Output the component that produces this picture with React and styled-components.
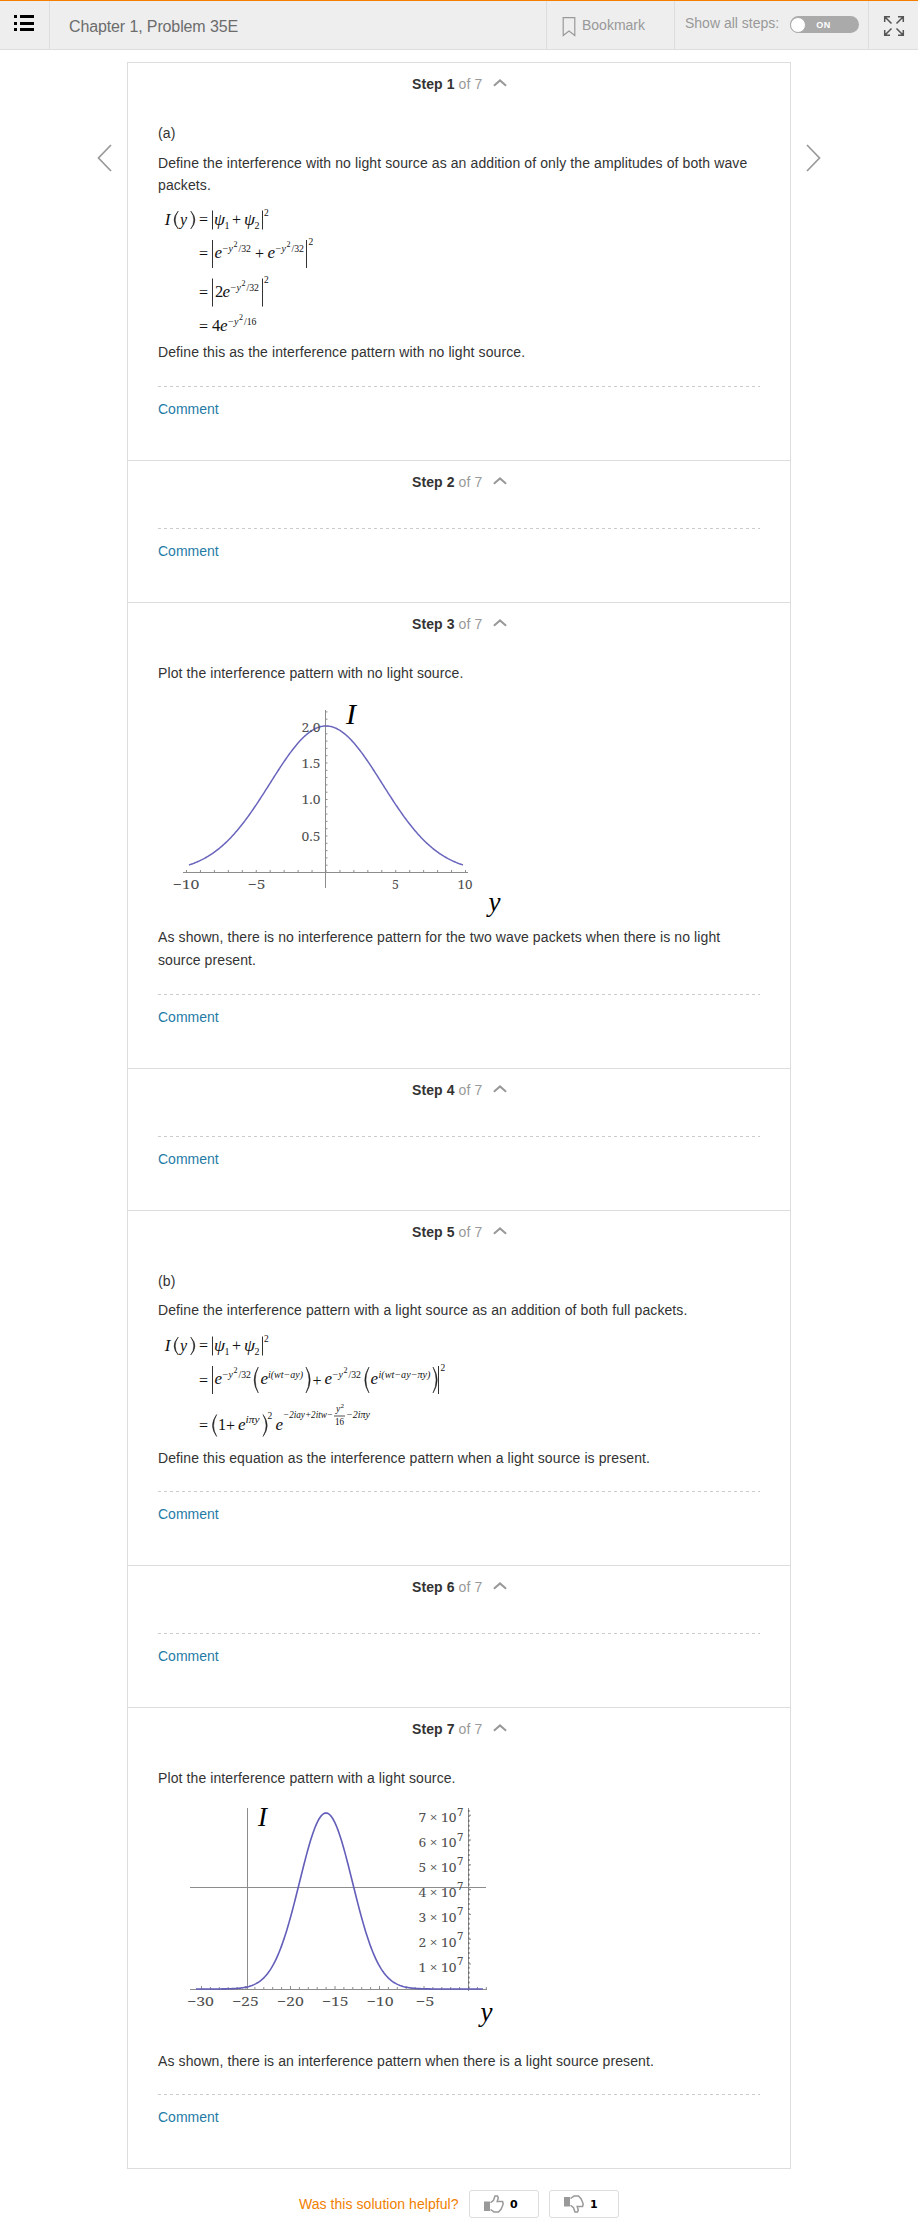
import React from 'react';
import styled, { createGlobalStyle } from 'styled-components';

const Global = createGlobalStyle`
  * { box-sizing: border-box; }
  html, body { margin: 0; background: #fff; }
  body { font-family: "Liberation Sans", Arial, sans-serif; font-size: 13px; color: #333; }
`;
const Page = styled.div`width: 918px; height: 2219px; overflow: hidden;`;
const Toolbar = styled.header`
  display: flex; height: 50px; background: #eee;
  border-top: 1px solid #f57d00; border-bottom: 1px solid #ddd; color: #999;
`;
const MenuButton = styled.div`width: 50px; border-right: 1px solid #ddd; padding: 14px 0 0 14px;`;
const Title = styled.h1`
  flex: 1; margin: 0; padding-left: 19px; font-weight: 400; font-size: 16px; line-height: 51px; color: #6c6c6c;
  letter-spacing: -.12px;
`;
const Tool = styled.div`
  display: flex; width: ${p => p.$w}px; border-left: 1px solid #ddd; padding: ${p => p.$pad};
`;
const BookmarkIcon = styled.svg`margin: 16px 6px 0 0;`;
const ToolText = styled.span`font-size: 14px; line-height: ${p => p.$lh}px; white-space: nowrap;`;
const Switch = styled.div`
  display: flex; align-items: center; width: 69px; height: 17px; margin: 15px 0 0 11px; border-radius: 9px;
  background: #aaa; color: #fff; font: 700 9px "Liberation Sans", sans-serif; letter-spacing: .6px;
`;
const Knob = styled.i`width: 16px; height: 16px; border: 1px solid #aaa; border-radius: 50%; background: #fff; margin-right: 10px;`;
const Main = styled.main`display: flex; padding-top: 12px;`;
const Side = styled.div`
  width: 127px; padding: 82px ${p => (p.$next ? '0 0 15px' : '15px 0 0')};
  display: flex; justify-content: ${p => (p.$next ? 'flex-start' : 'flex-end')}; align-items: flex-start;
`;
const Panel = styled.section`width: 664px; border: 1px solid #ddd; border-top: 0;`;
const Step = styled.article`
  height: ${p => p.$h}px; border-top: 1px solid #ddd; padding: 0 30px; display: flex; flex-direction: column;
`;
const StepHead = styled.h2`
  margin: 0; height: 44px; padding: 10px 0 0 254px; font-size: 14px; line-height: 22px; color: #333; display: flex;
  white-space: pre; letter-spacing: .1px;
`;
const Count = styled.span`font-weight: 400; color: #999; margin-right: 11px;`;
const Body = styled.div`flex: 1; padding-top: ${p => p.$top || 0}px;`;
const Text = styled.p`
  margin: 0 0 ${p => p.$gap || 0}px; font-size: 14px; line-height: ${p => p.$lh || 22}px; white-space: nowrap;
  letter-spacing: .1px;
`;
const Foot = styled.footer`height: 74px; padding-top: 12px;`;
const Dash = styled.svg`display: block; height: 1px; width: 602px; margin-bottom: -1px;`;
const Comment = styled.a`color: #1f7ba6; font-size: 14px; line-height: 22px;`;
const Figure = styled.svg`display: block; overflow: visible; margin-top: ${p => p.$top || 0}px;`;
const Helpful = styled.div`display: flex; padding: 21px 0 0 299px; color: #f08000; font-size: 14px;`;
const Question = styled.span`width: 170px; line-height: 28px; white-space: nowrap; letter-spacing: .05px;`;
const Vote = styled.button`
  width: 70px; height: 28px; margin-right: 10px; border: 1px solid #ddd; border-radius: 3px; background: #fff;
  display: flex; align-items: center; padding: 0 0 0 14px; gap: 6px;
  font: 700 11px "DejaVu Sans", sans-serif; color: #000;
`;

const serif = '"Liberation Serif", "Times New Roman", serif';

function StepBlock({ n, h, top, children }) {
  return (
    <Step $h={h}>
      <StepHead>
        <span>Step {n}</span><Count> of 7</Count>
        <svg width="14" height="20" viewBox="0 0 14 20"><path d="M.9 12.8L7 7.4L13.1 12.8" fill="none" stroke="#999" strokeWidth="2" /></svg>
      </StepHead>
      <Body $top={top}>{children}</Body>
      <Dash><line x1="0" y1=".5" x2="602" y2=".5" stroke="#ccc" strokeDasharray="3 3" /></Dash>
      <Foot><Comment>Comment</Comment></Foot>
    </Step>
  );
}

/* One run of maths text, stretched to the width w when given */
const Glyphs = styled.text`white-space: pre; font-style: ${p => (p.$up ? 'normal' : 'italic')};`;
function M({ x, y, s = 16, w, up, children }) {
  return <Glyphs x={x} y={y} fontSize={s} $up={up} textLength={w} lengthAdjust="spacingAndGlyphs">{children}</Glyphs>;
}
const Bar = ({ x, y1, y2 }) => <line x1={x} x2={x} y1={y1} y2={y2} stroke="#333" strokeWidth="1" />;
const Paren = ({ x, y, h, r }) => {
  const k = r ? 1 : -1;
  return <path d={`M${x} ${y}q${8.4 * k} ${h / 2} 0 ${h}q${6.2 * k} -${h / 2} 0 -${h}z`} fill="#222" stroke="#222" strokeWidth=".5" />;
};

/* I(y) = |psi1 + psi2|^2, with its baseline on y */
function FirstLine({ y }) {
  return (
    <g>
      <M x={6.8} y={y} s={17}>I</M>
      <Paren x={20.3} y={y - 13.5} h={18} /><M x={22} y={y}>y</M><Paren x={32.7} y={y - 13.5} h={18} r />
      <M x={41} y={y} up>=</M>
      <Bar x={54.5} y1={y - 14} y2={y + 5} />
      <M x={56} y={y} w={11}>ψ</M><M x={66.5} y={y + 4} s={10} up>1</M>
      <M x={74} y={y} up>+</M>
      <M x={86} y={y} w={11}>ψ</M><M x={96.5} y={y + 4} s={10} up>2</M>
      <Bar x={104.5} y1={y - 14} y2={y + 5} /><M x={106} y={y - 9} s={9.5} up>2</M>
    </g>
  );
}
/* e^(-y^2/den) with its left edge on x */
function Gauss({ x, y, den = '32' }) {
  return (
    <g>
      <M x={x} y={y} s={17}>e</M>
      <M x={x + 8} y={y - 6} s={10} up>−</M><M x={x + 14} y={y - 6} s={10}>y</M>
      <M x={x + 19} y={y - 11} s={8} up>2</M>
      <M x={x + 24} y={y - 6} s={10} w={12.5} up>/{den}</M>
    </g>
  );
}

function EquationA() {
  return (
    <Figure width="180" height="141" fontFamily={serif} fill="#111" $top={4}>
      <FirstLine y={24.5} />
      <M x={41} y={59} up>=</M><Bar x={54.5} y1={40} y2={68} /><Gauss x={56.5} y={58} />
      <M x={97} y={59} up>+</M><Gauss x={109.5} y={58} /><Bar x={148.5} y1={40} y2={68} /><M x={150.5} y={45} s={9.5} up>2</M>
      <M x={41} y={97.5} up>=</M><Bar x={54.5} y1={78.5} y2={106.5} /><M x={57} y={96.5} s={16.5} up>2</M><Gauss x={64.5} y={96.5} />
      <Bar x={104.5} y1={78.5} y2={106.5} /><M x={106} y={83} s={9.5} up>2</M>
      <M x={41} y={132} up>=</M><M x={54} y={131} s={16.5} up>4</M><Gauss x={62} y={131} den="16" />
    </Figure>
  );
}

function EquationB() {
  return (
    <Figure width="300" height="121" fontFamily={serif} fill="#111" $top={5}>
      <FirstLine y={24.5} />
      <M x={41} y={59.5} up>=</M><Bar x={54.5} y1={40} y2={68} /><Gauss x={56.5} y={58} />
      <Paren x={100.3} y={41} h={26} /><M x={102.5} y={58} s={17}>e</M><M x={110} y={52} s={10} w={35}>i(wt−ay)</M><Paren x={148} y={41} h={26} r />
      <M x={154.5} y={59.5} up>+</M><Gauss x={166.5} y={58} />
      <Paren x={211} y={41} h={26} /><M x={212.5} y={58} s={17}>e</M><M x={220.5} y={52} s={10} w={52}>i(wt−ay−πy)</M><Paren x={275} y={41} h={26} r />
      <Bar x={280.5} y1={40} y2={68} /><M x={282.5} y={45} s={9.5} up>2</M>
      <M x={41} y={105} up>=</M><Paren x={58.7} y={88.5} h={22} /><M x={60} y={104} up>1</M><M x={68} y={105} up>+</M>
      <M x={80} y={104} s={17}>e</M><M x={87.5} y={96.5} s={9.5} w={14}>iπy</M><Paren x={105} y={88.5} h={22} r /><M x={109.5} y={93} s={9.5} up>2</M>
      <M x={117.5} y={104} s={17}>e</M><M x={125} y={92} s={9.5} w={50}>−2iay+2itw−</M>
      <M x={178} y={85.5} s={9.5}>y</M><M x={182.5} y={81.5} s={7} up>2</M>
      <line x1="176" x2="187" y1="90" y2="90" stroke="#222" strokeWidth=".8" />
      <M x={177} y={99} s={9.5} w={9} up>16</M><M x={188} y={92} s={9.5} w={24}>−2iπy</M>
    </Figure>
  );
}

function curve(x0, x1, mid, sigma, base, height) {
  const pts = [];
  for (let x = x0; x <= x1; x += 1) pts.push(`${x} ${(base - height * Math.exp(-((x - mid) ** 2) / (2 * sigma * sigma))).toFixed(2)}`);
  return `M${pts.join('L')}`;
}
const range = n => Array.from({ length: n }, (_, i) => i);
const Axis = props => <path fill="none" stroke="#8c8c8c" strokeWidth="1" {...props} />;
function Label({ x, y, w, anchor = 'middle', children }) {
  return <text x={x} y={y} fontSize="12.5" fill="#505050" textAnchor={anchor} textLength={w} lengthAdjust="spacingAndGlyphs">{children}</text>;
}
const Serif = '"Noto Serif", "DejaVu Serif", serif';
const Variable = styled.text`font-family: ${serif}; font-style: italic; fill: #000;`;

function PlotA() {
  return (
    <Figure width="360" height="236" fontFamily={Serif} $top={6}>
      <Axis d="M25 182.5H310M167.5 20V198" />
      <Axis d={range(21).map(i => `M${28.5 + i * 13.95} 182v-2`).join('')} />
      <Axis d={range(22).map(i => `M168 ${175.2 - i * 7.3}h1.5`).join('')} />
      <path d={curve(31, 305, 168, 56.2, 182.5, 146.5)} fill="none" stroke="#6a66bd" strokeWidth="1.5" />
      {[['2.0', 42], ['1.5', 78], ['1.0', 114], ['0.5', 151]].map(([t, y]) => <Label key={t} x={153} y={y} w={19}>{t}</Label>)}
      {[['−10', 28, 27], ['−5', 98.5, 18], ['5', 237.5, 7], ['10', 307, 15]].map(([t, x, w]) => <Label key={t} x={x} y={199} w={w}>{t}</Label>)}
      <Variable x="188" y="34" fontSize="30">I</Variable>
      <Variable x="330.5" y="221" fontSize="27">y</Variable>
    </Figure>
  );
}

function PlotB() {
  return (
    <Figure width="360" height="260" fontFamily={Serif} $top={1}>
      <Axis d="M32 199.5H329M89.5 18V199M32 97.5H328M310.5 18V201" />
      <Axis d={range(33).map(i => `M${43.5 + i * 8.9} 199v-${i % 5 ? 2 : 3}`).join('')} />
      <Axis stroke="#666" strokeDasharray="2 2.9" strokeWidth="1.4" d="M310.8 20V199" />
      <Axis d={range(7).map(i => `M310 ${174 - i * 24.8}h3`).join('')} />
      <path d={curve(38, 325, 168, 26.5, 199, 176)} fill="none" stroke="#625eb9" strokeWidth="1.6" />
      {range(7).map(i => (
        <g key={i}>
          <Label x={260.5} y={181.5 - i * 24.9} anchor="start" w={38}>{`${i + 1} × 10`}</Label>
          <text x="299" y={175 - i * 24.9} fontSize="11.5" fill="#505050">7</text>
        </g>
      ))}
      {['−30', '−25', '−20', '−15', '−10', '−5'].map((t, i) => <Label key={t} x={42.5 + i * 44.9} y={216} w={t.length > 2 ? 27 : 19}>{t}</Label>)}
      <Variable x="100" y="36" fontSize="27">I</Variable>
      <Variable x="322.5" y="231" fontSize="27">y</Variable>
    </Figure>
  );
}

const Thumb = ({ down }) => (
  <svg width="20" height="18" viewBox="0 0 20 18">
    <g transform={down ? 'matrix(1 0 0 -1 0 18)' : undefined}>
      <path d="M0 6.5H6V16H0Z" fill="#999" />
      <path d="M6.5 7.8L9.5 5.2L11 .9H13.5L14.3 3L13.2 6.5H18.6L19.2 9L17.2 14L14.5 16.9H10L6.5 14.5" fill="none" stroke="#999" strokeWidth="1.5" />
    </g>
  </svg>
);

export default function App() {
  return (
    <Page>
      <Global />
      <Toolbar>
        <MenuButton>
          <svg width="20" height="17" viewBox="0 0 20 17"><path d="M0 0h3v3H0zM6 0h14v3H6zM0 7h3v3H0zM6 7h14v3H6zM0 13h3v3H0zM6 13h14v3H6z" fill="#000" /></svg>
        </MenuButton>
        <Title>Chapter 1, Problem 35E</Title>
        <Tool $w={128} $pad="0 0 0 15px">
          <BookmarkIcon width="14" height="20" viewBox="0 0 14 20"><path d="M1.2 .7H12.8V18.5L7 14L1.2 18.5Z" fill="none" stroke="#999" strokeWidth="1.2" /></BookmarkIcon>
          <ToolText $lh={49}>Bookmark</ToolText>
        </Tool>
        <Tool $w={194} $pad="0 0 0 10px">
          <ToolText $lh={45}>Show all steps:</ToolText>
          <Switch><Knob />ON</Switch>
        </Tool>
        <Tool $w={50} $pad="14px 0 0 14px">
          <svg width="22" height="22" viewBox="0 0 22 22" fill="none" stroke="#555" strokeWidth="1.5"><path d="M8.5 8.5L2 2M1.7 7V1.7H7M13.5 8.5L20 2M15 1.7h5.3V7M8.5 13.5L2 20M1.7 15v5.3H7M13.5 13.5L20 20M15 20.3h5.3V15" /></svg>
        </Tool>
      </Toolbar>
      <Main>
        <Side><svg width="15" height="28" viewBox="0 0 15 28"><path d="M14 1L1.5 14L14 27" fill="none" stroke="#999" strokeWidth="1.7" /></svg></Side>
        <Panel>
          <StepBlock n={1} h={398} top={15}>
            <Text $gap={8}>(a)</Text>
            <Text>Define the interference with no light source as an addition of only the amplitudes of both wave</Text>
            <Text>packets.</Text>
            <EquationA />
            <Text>Define this as the interference pattern with no light source.</Text>
          </StepBlock>
          <StepBlock n={2} h={142} />
          <StepBlock n={3} h={466} top={15}>
            <Text>Plot the interference pattern with no light source.</Text>
            <PlotA />
            <Text $lh={23}>As shown, there is no interference pattern for the two wave packets when there is no light</Text>
            <Text $lh={23}>source present.</Text>
          </StepBlock>
          <StepBlock n={4} h={142} />
          <StepBlock n={5} h={355} top={15}>
            <Text $gap={7}>(b)</Text>
            <Text>Define the interference pattern with a light source as an addition of both full packets.</Text>
            <EquationB />
            <Text>Define this equation as the interference pattern when a light source is present.</Text>
          </StepBlock>
          <StepBlock n={6} h={142} />
          <StepBlock n={7} h={461} top={15}>
            <Text>Plot the interference pattern with a light source.</Text>
            <PlotB />
            <Text>As shown, there is an interference pattern when there is a light source present.</Text>
          </StepBlock>
        </Panel>
        <Side $next><svg width="15" height="28" viewBox="0 0 15 28"><path d="M1 1L13.5 14L1 27" fill="none" stroke="#999" strokeWidth="1.7" /></svg></Side>
      </Main>
      <Helpful>
        <Question>Was this solution helpful?</Question>
        <Vote><Thumb />0</Vote>
        <Vote><Thumb down />1</Vote>
      </Helpful>
    </Page>
  );
}
